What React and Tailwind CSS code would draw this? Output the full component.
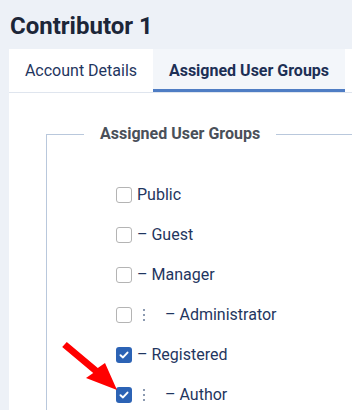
import React from "react";

function Box({ checked }) {
  if (checked) {
    return (
      <span className="flex h-4 w-4 shrink-0 items-center justify-center rounded-[3px] bg-[#2c63b5]">
        <svg width="10" height="8" viewBox="0 0 10 8">
          <path d="M1.5 4.2 L4 6.4 L8.5 1.6" fill="none" stroke="#ffffff" strokeWidth="2" strokeLinecap="round" strokeLinejoin="round" />
        </svg>
      </span>
    );
  }
  return <span className="block h-4 w-4 shrink-0 rounded-[3px] border border-[#b4b4b4] bg-white" />;
}

function Dots() {
  return (
    <span className="ml-[10px] mr-[20px] flex w-[3px] flex-col items-center gap-[3px]">
      <span className="h-[2px] w-[2px] bg-[#8c9bb1]" />
      <span className="h-[2px] w-[2px] bg-[#8c9bb1]" />
      <span className="h-[2px] w-[2px] bg-[#8c9bb1]" />
    </span>
  );
}

function Row({ checked, dash, dots, label }) {
  return (
    <div className="flex h-10 items-center">
      <Box checked={checked} />
      {dots ? <Dots /> : <span className="w-[5px]" />}
      <span className="text-[16px] leading-none text-[#1f3660]">
        {dash ? "\u2013\u00a0" : ""}
        {label}
      </span>
    </div>
  );
}

export default function App() {
  return (
    <div className="relative h-[410px] w-[352px] overflow-hidden bg-[#edf1f7] font-['Roboto',sans-serif]">
      <h1 className="pl-[10px] pt-[10px] text-[24px] font-bold leading-[32px] text-[#1c2638]">Contributor 1</h1>
      <div className="ml-[9px] mt-[7px] h-full bg-white">
        <div className="flex h-[44px] border-b border-[#dfe5ee]">
          <div className="flex w-[144px] items-center justify-center text-[16px] text-[#1f3660]">Account Details</div>
          <div className="flex w-[192px] items-center justify-center border-b-[3px] border-[#4f7dc4] bg-[#f3f6fa] pt-[3px] text-[16px] font-bold text-[#1c2f55]">
            Assigned User Groups
          </div>
        </div>
        <fieldset className="ml-[37px] mt-[29px] border border-r-0 border-b-0 border-[#b9c8dc]">
          <legend className="ml-[37px] px-[16px] text-[16px] font-bold leading-[24px] text-[#4a5059]">Assigned User Groups</legend>
          <div className="pl-[69px] pt-[29px]">
            <Row label="Public" />
            <Row label="Guest" dash />
            <Row label="Manager" dash />
            <Row label="Administrator" dash dots />
            <Row label="Registered" dash checked />
            <Row label="Author" dash dots checked />
          </div>
        </fieldset>
      </div>
      <svg className="absolute left-0 top-0" width="352" height="410" viewBox="0 0 352 410">
        <polygon
          points="66.8,341.9 97.8,367.9 105,363 117,390 86,378 93.2,373.1 62.2,347.1"
          fill="#ff0000"
        />
      </svg>
    </div>
  );
}
